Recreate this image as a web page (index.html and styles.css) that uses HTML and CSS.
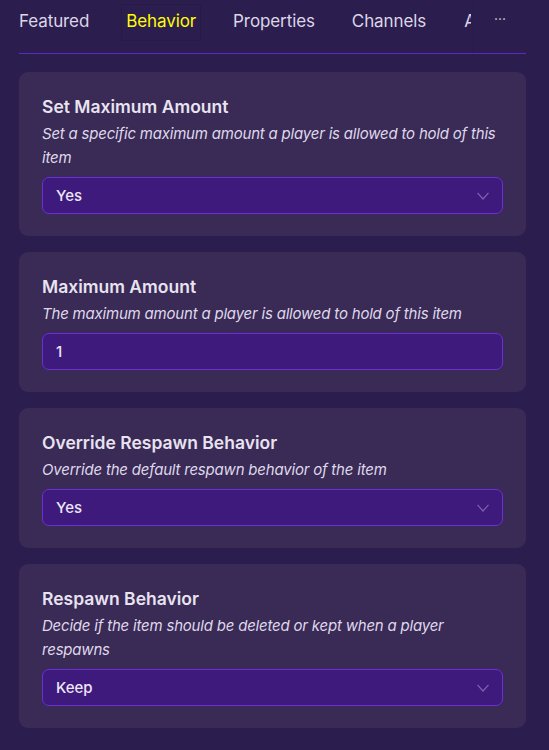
FILE: index.html
```html
<!DOCTYPE html>
<html>
<head>
<meta charset="utf-8">
<link rel="stylesheet" href="styles.css">
</head>
<body>
<div class="page">
  <div class="tabbar">
    <div class="tabs">
      <div class="tab"><span class="label">Featured</span></div>
      <div class="tab active"><span class="label">Behavior</span></div>
      <div class="tab"><span class="label">Properties</span></div>
      <div class="tab"><span class="label">Channels</span></div>
      <div class="tab clipped"><span class="label">A</span></div>
    </div>
    <div class="more">···</div>
  </div>

  <div class="cards">
    <div class="card">
      <div class="title">Set Maximum Amount</div>
      <div class="desc">Set a specific maximum amount a player is allowed to hold of this item</div>
      <div class="field select"><span>Yes</span>
        <svg class="chev" width="12" height="8" viewBox="0 0 12 8"><path d="M0.5 0.8 L6 7 L11.5 0.8" fill="none" stroke="#7d62b3" stroke-width="1.2"/></svg>
      </div>
    </div>
    <div class="card">
      <div class="title">Maximum Amount</div>
      <div class="desc">The maximum amount a player is allowed to hold of this item</div>
      <div class="field"><span>1</span></div>
    </div>
    <div class="card">
      <div class="title">Override Respawn Behavior</div>
      <div class="desc">Override the default respawn behavior of the item</div>
      <div class="field select"><span>Yes</span>
        <svg class="chev" width="12" height="8" viewBox="0 0 12 8"><path d="M0.5 0.8 L6 7 L11.5 0.8" fill="none" stroke="#7d62b3" stroke-width="1.2"/></svg>
      </div>
    </div>
    <div class="card">
      <div class="title">Respawn Behavior</div>
      <div class="desc">Decide if the item should be deleted or kept when a player respawns</div>
      <div class="field select"><span>Keep</span>
        <svg class="chev" width="12" height="8" viewBox="0 0 12 8"><path d="M0.5 0.8 L6 7 L11.5 0.8" fill="none" stroke="#7d62b3" stroke-width="1.2"/></svg>
      </div>
    </div>
  </div>
</div>
</body>
</html>
```
FILE: styles.css
```css
html, body {
  margin: 0;
  padding: 0;
  background: #2c1d4f;
  font-family: Inter, "Noto Sans", sans-serif;
  color: #e6e1ee;
}
.page {
  padding: 0 23px 0 19px;
}
.tabbar {
  display: flex;
  height: 53px;
  border-bottom: 1px solid #5a2bc4;
}
.tabs {
  display: flex;
  gap: 37px;
  width: 453px;
  overflow: hidden;
  flex: none;
}
.tab {
  flex: none;
  box-sizing: border-box;
  height: 55px;
  margin-bottom: -2px;
  padding-top: 4px;
  border-bottom: 2px solid transparent;
  font-size: 17px;
  letter-spacing: -0.1px;
  color: #dcd6e6;
}
.tab .label {
  display: inline-block;
  line-height: 24px;
  padding: 4px 4px 7px;
  margin: 0 -5px;
  border: 1px solid transparent;
}
.tab.clipped {
  width: 8px;
  overflow: hidden;
}
.tab.clipped .label {
  margin: 0;
  padding-left: 0;
  padding-right: 0;
}
.tab.active {
  color: #ffff00;
  border-bottom-color: #ffff00;
}
.tab.active .label {
  border-color: #281a45;
}
.more {
  flex: 1;
  font-size: 14px;
  color: #cfc8dc;
  padding: 10px 0 0 21px;
  border-left: 1px solid #2a1b4b;
}
.cards {
  padding-top: 18px;
}
.card {
  background: #3a2a56;
  border-radius: 9px;
  padding: 23px 23px 22px;
  margin-bottom: 16px;
}
.title {
  font-size: 17.5px;
  font-weight: 600;
  line-height: 24px;
  color: #e8e3f0;
}
.desc {
  margin-top: 3px;
  font-size: 15px;
  font-style: italic;
  line-height: 24px;
  letter-spacing: -0.2px;
  color: #dfd8ea;
}
.field {
  margin-top: 7px;
  box-sizing: border-box;
  height: 37px;
  border: 1px solid #6a2fd8;
  border-radius: 7px;
  background: #3e1a7d;
  display: flex;
  align-items: center;
  justify-content: space-between;
  padding: 0 13px;
  font-size: 15px;
  font-weight: 500;
  color: #ece6f5;
}
.chev {
  display: block;
}
```
